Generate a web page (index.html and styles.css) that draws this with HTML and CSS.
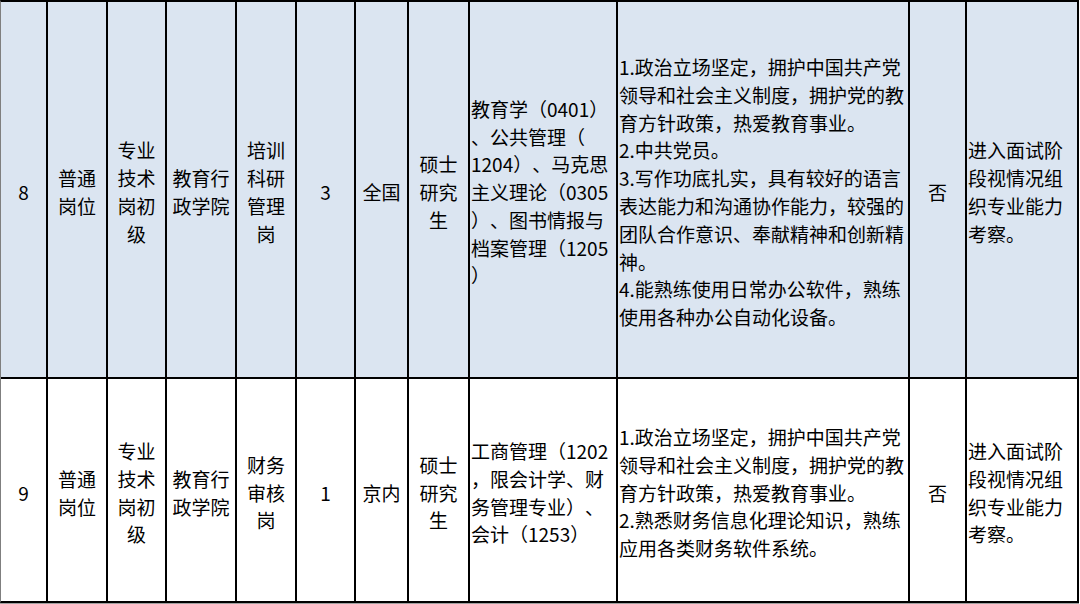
FILE: index.html
```html
<!DOCTYPE html>
<html lang="zh-CN">
<head>
<meta charset="utf-8">
<title>岗位表</title>
<link rel="stylesheet" href="styles.css">
</head>
<body>
<div class="sheet">
  <div class="cell blue c">8</div>
  <div class="cell blue c">普通<br>岗位</div>
  <div class="cell blue c">专业<br>技术<br>岗初<br>级</div>
  <div class="cell blue c">教育行<br>政学院</div>
  <div class="cell blue c">培训<br>科研<br>管理<br>岗</div>
  <div class="cell blue c">3</div>
  <div class="cell blue c">全国</div>
  <div class="cell blue c">硕士<br>研究<br>生</div>
  <div class="cell blue l">教育学（0401）<br>、公共管理（<br>1204）、马克思<br>主义理论（0305<br>）、图书情报与<br>档案管理（1205<br>）</div>
  <div class="cell blue l">1.政治立场坚定，拥护中国共产党<br>领导和社会主义制度，拥护党的教<br>育方针政策，热爱教育事业。<br>2.中共党员。<br>3.写作功底扎实，具有较好的语言<br>表达能力和沟通协作能力，较强的<br>团队合作意识、奉献精神和创新精<br>神。<br>4.能熟练使用日常办公软件，熟练<br>使用各种办公自动化设备。</div>
  <div class="cell blue c">否</div>
  <div class="cell blue l">进入面试阶<br>段视情况组<br>织专业能力<br>考察。</div>

  <div class="cell c">9</div>
  <div class="cell c">普通<br>岗位</div>
  <div class="cell c">专业<br>技术<br>岗初<br>级</div>
  <div class="cell c">教育行<br>政学院</div>
  <div class="cell c">财务<br>审核<br>岗</div>
  <div class="cell c">1</div>
  <div class="cell c">京内</div>
  <div class="cell c">硕士<br>研究<br>生</div>
  <div class="cell l">工商管理（1202<br>，限会计学、财<br>务管理专业）、<br>会计（1253）</div>
  <div class="cell l">1.政治立场坚定，拥护中国共产党<br>领导和社会主义制度，拥护党的教<br>育方针政策，热爱教育事业。<br>2.熟悉财务信息化理论知识，熟练<br>应用各类财务软件系统。</div>
  <div class="cell c">否</div>
  <div class="cell l">进入面试阶<br>段视情况组<br>织专业能力<br>考察。</div>
</div>
</body>
</html>
```

FILE: styles.css
```css
html, body {
  margin: 0;
  padding: 0;
  background: #ffffff;
}

body {
  width: 1080px;
  height: 604px;
  overflow: hidden;
  font-family: "Noto Sans CJK SC", "Noto Sans", sans-serif;
  color: #000;
}

.sheet {
  display: grid;
  grid-template-columns: 45px 58px 57px 68px 58px 57px 51px 59px 146px 290px 55px 110px;
  grid-template-rows: 375px 222px;
  gap: 2px;
  background: #000;
  border-top: 2px solid #000;
  border-right: 2px solid #000;
  border-bottom: 2px solid #000;
  border-left: 1px solid #7f7f7f;
  width: max-content;
  box-shadow: 0 1px 0 #a0a0a0;
}

.cell {
  background: #ffffff;
  font-size: 19px;
  line-height: 27.8px;
  white-space: nowrap;
  display: flex;
  align-items: center;
  padding-top: 5px;
  box-sizing: border-box;
  overflow: hidden;
  text-spacing-trim: space-all;
  font-feature-settings: "halt" 0, "chws" 0;
}

.blue {
  background: #dbe5f1;
}

.c {
  justify-content: center;
  text-align: center;
}

.l {
  justify-content: flex-start;
  text-align: left;
  padding-left: 1px;
}
```
